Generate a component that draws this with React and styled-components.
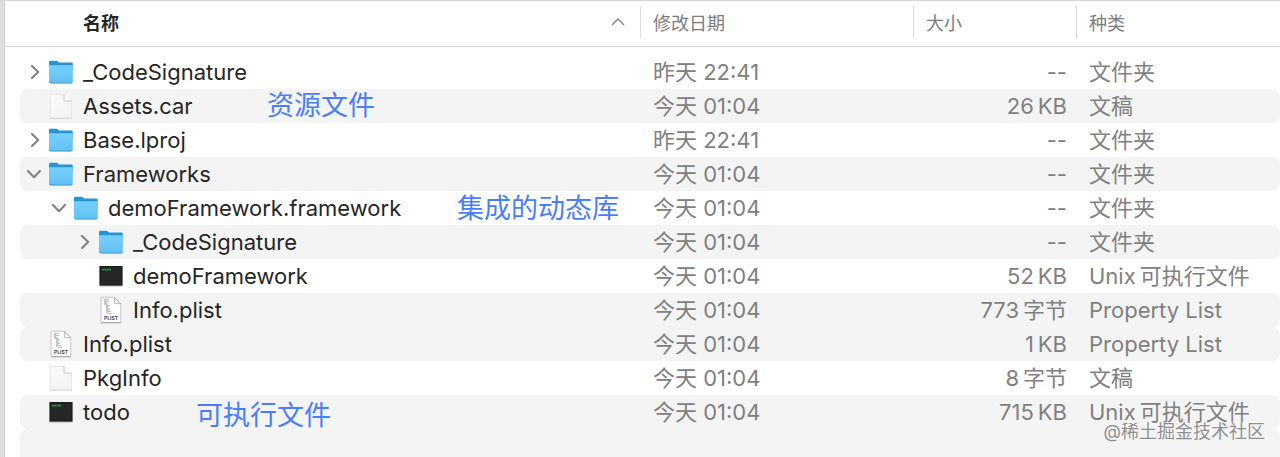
import React, { useState } from 'react'
import styled, { createGlobalStyle } from 'styled-components'

const GlobalStyle = createGlobalStyle`
    * {
        box-sizing: border-box;
    }
    body {
        margin: 0;
        background: #ffffff;
        font-family: Inter, 'Noto Sans CJK SC', sans-serif;
    }
`;

// units and mixed-script labels are joined with a thin space
const thin = '\u2009';

const files = [
    { id: 1, name: '_CodeSignature', icon: 'folder', depth: 0, open: false, date: '昨天 22:41', size: '--', kind: '文件夹' },
    { id: 2, name: 'Assets.car', icon: 'file', depth: 0, date: '今天 01:04', size: `26${thin}KB`, kind: '文稿', striped: true },
    { id: 3, name: 'Base.lproj', icon: 'folder', depth: 0, open: false, date: '昨天 22:41', size: '--', kind: '文件夹' },
    { id: 4, name: 'Frameworks', icon: 'folder', depth: 0, open: true, date: '今天 01:04', size: '--', kind: '文件夹', striped: true },
    { id: 5, name: 'demoFramework.framework', icon: 'folder', depth: 1, open: true, date: '今天 01:04', size: '--', kind: '文件夹' },
    { id: 6, name: '_CodeSignature', icon: 'folder', depth: 2, open: false, date: '今天 01:04', size: '--', kind: '文件夹', striped: true },
    { id: 7, name: 'demoFramework', icon: 'exec', depth: 2, date: '今天 01:04', size: `52${thin}KB`, kind: `Unix${thin}可执行文件` },
    { id: 8, name: 'Info.plist', icon: 'plist', depth: 2, date: '今天 01:04', size: `773${thin}字节`, kind: 'Property List', striped: true },
    { id: 9, name: 'Info.plist', icon: 'plist', depth: 0, date: '今天 01:04', size: `1${thin}KB`, kind: 'Property List', striped: true },
    { id: 10, name: 'PkgInfo', icon: 'file', depth: 0, date: '今天 01:04', size: `8${thin}字节`, kind: '文稿' },
    { id: 11, name: 'todo', icon: 'exec', depth: 0, date: '今天 01:04', size: `715${thin}KB`, kind: `Unix${thin}可执行文件`, striped: true },
];

const notes = [
    { text: '资源文件', left: 267, top: 89 },
    { text: '集成的动态库', left: 457, top: 192 },
    { text: '可执行文件', left: 196, top: 399 },
];

function FolderIcon() {
    return (
        <svg width="26" height="26" viewBox="0 0 26 26" aria-hidden="true">
            <defs>
                <linearGradient id="folderFront" x1="0" y1="0" x2="0" y2="1">
                    <stop offset="0" stopColor="#77d0fc" />
                    <stop offset="1" stopColor="#62c1f3" />
                </linearGradient>
            </defs>
            <path d="M1 3.2Q1 1.8 2.4 1.8H8.3Q9.2 1.8 9.9 2.4L11 3.4H23.4Q24.8 3.4 24.8 4.8V12H1z" fill="#2a94d2" />
            <path d="M1 6.2H24.8V22.6Q24.8 24.2 23.2 24.2H2.6Q1 24.2 1 22.6z" fill="url(#folderFront)" />
            <path d="M1.3 22.9Q1.7 24 2.8 24H23Q24.1 24 24.5 22.9" fill="none" stroke="#459fcd" strokeWidth="1" />
        </svg>
    )
}

function FileIcon() {
    return (
        <svg width="26" height="28" viewBox="0 0 26 28" aria-hidden="true">
            <defs>
                <linearGradient id="paper" x1="0" y1="0" x2="1" y2="1">
                    <stop offset="0" stopColor="#fbfbfb" />
                    <stop offset="1" stopColor="#f1f1f1" />
                </linearGradient>
            </defs>
            <path d="M2.5 2.5H16L23.5 9V26H2.5z" fill="url(#paper)" stroke="#e8e8e8" strokeWidth="1" />
            <path d="M2.4 26.3H23.8" stroke="#d6d6d6" strokeWidth="1" />
            <path d="M16 2.5V8Q16 9 17 9H23.5" fill="#ffffff" stroke="#c4c4c4" strokeWidth="1" />
        </svg>
    )
}

function PlistIcon() {
    return (
        <svg width="26" height="28" viewBox="0 0 26 28" aria-hidden="true">
            <path d="M3.8 1.2H16.4L22.8 7.6V26.4H3.8Q3 26.4 3 25.6V2Q3 1.2 3.8 1.2z" fill="#ffffff" stroke="#c4c4c4" strokeWidth="1" />
            <path d="M3 26.8H23" stroke="#a5a5a5" strokeWidth="1" />
            <path d="M16.4 1.4V6.8Q16.4 7.6 17.2 7.6H22.6z" fill="#f7f7f7" stroke="#b5b5b5" strokeWidth="1" />
            <path d="M5.5 3.5H11M7 5.5H11.5M7 7.5H10M8.5 9.5H12M8.5 11.5H11M9 13.5H12M9 15.5H13M10 17.5H14" stroke="#c0c0c0" strokeWidth="1.2" />
            <path d="M7 4V9M9 8V17" stroke="#b4b4b4" strokeWidth="1.4" />
            <text x="13" y="23.6" fontFamily="Inter, sans-serif" fontSize="5" fontWeight="700" textAnchor="middle" fill="#4a4a4a">PLIST</text>
        </svg>
    )
}

function ExecIcon() {
    return (
        <svg width="26" height="26" viewBox="0 0 26 26" aria-hidden="true">
            <rect x="1.5" y="3" width="23" height="20.5" fill="#a8a8a8" />
            <rect x="1.5" y="3" width="23" height="19.5" fill="#1b1b1b" />
            <rect x="2.6" y="4.1" width="20.8" height="17.3" fill="#252726" />
            <path d="M4 6.7H13" stroke="#2fa04a" strokeWidth="1.7" strokeDasharray="1.8 0.6" />
        </svg>
    )
}

const icons = {
    folder: FolderIcon,
    file: FileIcon,
    plist: PlistIcon,
    exec: ExecIcon,
};

function FileRow({ file }) {
    const [open, setOpen] = useState(file.open);
    const Icon = icons[file.icon];

    return (
        <Row $striped={file.striped}>
            <NameCell $depth={file.depth}>
                <ToggleSlot>
                    {file.icon === 'folder' && (
                        <Toggle type="button" aria-label={file.name} aria-expanded={open} onClick={() => setOpen(!open)}>
                            <svg width="16" height="16" viewBox="0 0 16 16">
                                {open
                                    ? <path d="M2 5L8 11.2L14 5" />
                                    : <path d="M6 2L12.2 8L6 14" />}
                            </svg>
                        </Toggle>
                    )}
                </ToggleSlot>
                <IconSlot><Icon /></IconSlot>
                <span>{file.name}</span>
            </NameCell>
            <Cell>{file.date}</Cell>
            <SizeCell>{file.size}</SizeCell>
            <Cell>{file.kind}</Cell>
        </Row>
    )
}

function App() {
    return (
        <>
            <GlobalStyle />
            <Finder>
                <Table>
                    <thead>
                        <HeadRow>
                            <HeadCell scope="col" aria-sort="ascending">
                                <SortButton type="button" $active>
                                    名称
                                    <svg width="14" height="8" viewBox="0 0 14 8" aria-hidden="true">
                                        <path d="M1 7L7 1L13 7" fill="none" stroke="#808080" strokeWidth="1.4" />
                                    </svg>
                                </SortButton>
                            </HeadCell>
                            <HeadCell scope="col"><SortButton type="button">修改日期</SortButton></HeadCell>
                            <HeadCell scope="col"><SortButton type="button">大小</SortButton></HeadCell>
                            <HeadCell scope="col"><SortButton type="button">种类</SortButton></HeadCell>
                        </HeadRow>
                    </thead>
                    <Body>
                        {files.map((file) => <FileRow key={file.id} file={file} />)}
                    </Body>
                </Table>
                <EmptyRow />
                {notes.map((note) => (
                    <Note key={note.text} $left={note.left} $top={note.top}>{note.text}</Note>
                ))}
                <Watermark>@稀土掘金技术社区</Watermark>
            </Finder>
        </>
    )
}

const Finder = styled.main`
    position: relative;
    display: flex;
    flex-direction: column;
    min-height: 100vh;
    overflow: hidden;
    border-top: 1px solid #d6d6d6;
    &::before {
        content: '';
        position: absolute;
        inset: 0 auto 0 0;
        width: 4px;
        background: #dedede;
        border-right: 1px solid #d2d2d2;
    }
`;

const Table = styled.table`
    display: block;
    thead {
        display: block;
        margin-left: 4px;
        border-bottom: 1px solid #d9d9d9;
    }
`;

const columns = 'minmax(0, 1fr) 273px 163px 204px';

const HeadRow = styled.tr`
    display: grid;
    grid-template-columns: ${columns};
    padding: 5px 0 8px;
`;

const HeadCell = styled.th`
    padding: 0;
    & + & {
        border-left: 1px solid #dcdcdc;
    }
`;

const SortButton = styled.button`
    display: flex;
    align-items: center;
    justify-content: space-between;
    width: 100%;
    height: 32px;
    padding: ${props => props.$active ? '0 15px 0 79px' : '0 12px'};
    border: 0;
    background: none;
    color: ${props => props.$active ? '#262626' : '#7d7d7d'};
    font-family: inherit;
    font-size: 18px;
    font-weight: ${props => props.$active ? 700 : 400};
    text-align: left;
`;

const Body = styled.tbody`
    display: block;
    padding-top: 8px;
`;

const Row = styled.tr`
    display: grid;
    grid-template-columns: ${columns};
    height: 34px;
    margin-left: 20px;
    border-radius: 8px;
    background: ${props => props.$striped ? '#f4f4f4' : 'transparent'};
    line-height: 34px;
`;

const Cell = styled.td`
    padding: 0 0 0 13px;
    color: #808080;
    font-size: 22px;
    white-space: nowrap;
`;

const NameCell = styled(Cell)`
    display: flex;
    align-items: center;
    padding-left: ${props => props.$depth * 25}px;
    color: #262626;
`;

const SizeCell = styled(Cell)`
    padding-right: 9px;
    text-align: right;
`;

const ToggleSlot = styled.span`
    display: flex;
    justify-content: center;
    width: 28px;
`;

const Toggle = styled.button`
    display: flex;
    padding: 0;
    border: 0;
    background: none;
    path {
        fill: none;
        stroke: #858585;
        stroke-width: 2.2;
        stroke-linecap: round;
        stroke-linejoin: round;
    }
`;

const IconSlot = styled.span`
    display: flex;
    width: 35px;
`;

const EmptyRow = styled.div`
    flex: 1;
    min-height: 27px;
    margin-left: 20px;
    border-radius: 8px 8px 0 0;
    background: #f4f4f4;
`;

const Note = styled.span`
    position: absolute;
    left: ${props => props.$left}px;
    top: ${props => props.$top}px;
    color: #4a7dfa;
    font-size: 27px;
    line-height: 32px;
`;

const Watermark = styled.span`
    position: absolute;
    right: 15px;
    bottom: 14px;
    color: #8f8f8f;
    font-size: 18px;
    line-height: 22px;
    text-shadow: 0 0 2px #ffffff;
`;

export default App
